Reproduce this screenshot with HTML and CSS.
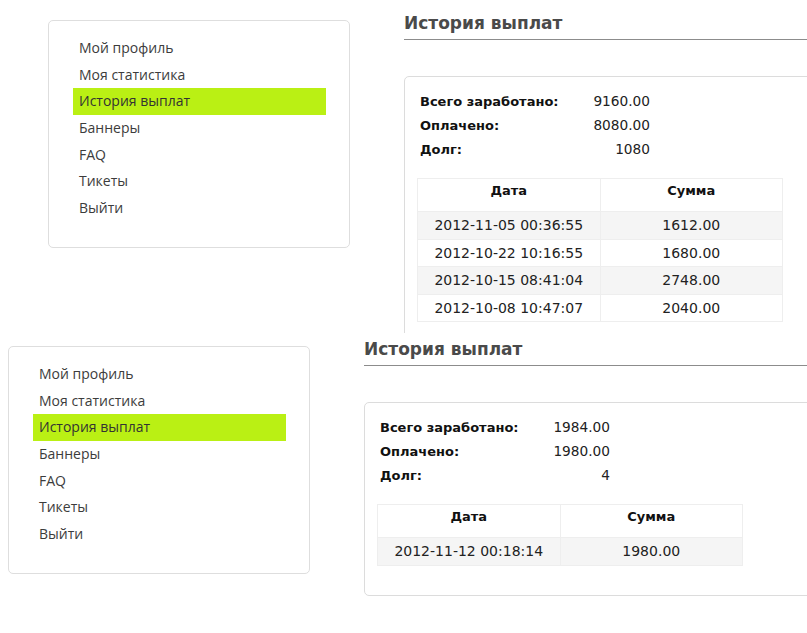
FILE: index.html
```html
<!DOCTYPE html>
<html lang="ru">
<head>
<meta charset="utf-8">
<title>История выплат</title>
<link rel="stylesheet" href="styles.css">
</head>
<body>
<div class="shot shot-a">
  <div class="page">
    <aside class="sidebar">
      <ul class="menu">
        <li>Мой профиль</li>
        <li>Моя статистика</li>
        <li class="active">История выплат</li>
        <li>Баннеры</li>
        <li>FAQ</li>
        <li>Тикеты</li>
        <li>Выйти</li>
      </ul>
    </aside>
    <main class="content">
      <h1 class="title">История выплат</h1>
      <div class="card">
        <table class="summary">
          <tr><td class="label">Всего заработано:</td><td class="value">9160.00</td></tr>
          <tr><td class="label">Оплачено:</td><td class="value">8080.00</td></tr>
          <tr><td class="label">Долг:</td><td class="value">1080</td></tr>
        </table>
        <table class="payments">
          <thead><tr><th>Дата</th><th>Сумма</th></tr></thead>
          <tbody>
            <tr><td>2012-11-05 00:36:55</td><td>1612.00</td></tr>
            <tr><td>2012-10-22 10:16:55</td><td>1680.00</td></tr>
            <tr><td>2012-10-15 08:41:04</td><td>2748.00</td></tr>
            <tr><td>2012-10-08 10:47:07</td><td>2040.00</td></tr>
          </tbody>
        </table>
      </div>
    </main>
  </div>
</div>
<div class="shot shot-b">
  <div class="page">
    <aside class="sidebar">
      <ul class="menu">
        <li>Мой профиль</li>
        <li>Моя статистика</li>
        <li class="active">История выплат</li>
        <li>Баннеры</li>
        <li>FAQ</li>
        <li>Тикеты</li>
        <li>Выйти</li>
      </ul>
    </aside>
    <main class="content">
      <h1 class="title">История выплат</h1>
      <div class="card">
        <table class="summary">
          <tr><td class="label">Всего заработано:</td><td class="value">1984.00</td></tr>
          <tr><td class="label">Оплачено:</td><td class="value">1980.00</td></tr>
          <tr><td class="label">Долг:</td><td class="value">4</td></tr>
        </table>
        <table class="payments">
          <thead><tr><th>Дата</th><th>Сумма</th></tr></thead>
          <tbody>
            <tr><td>2012-11-12 00:18:14</td><td>1980.00</td></tr>
          </tbody>
        </table>
      </div>
    </main>
  </div>
</div>
</body>
</html>
```

FILE: styles.css
```css
* { box-sizing: border-box; }
html, body { margin: 0; padding: 0; background: #fff; }
body { font-family: "DejaVu Sans", Verdana, sans-serif; color: #222; }

.shot { overflow: hidden; width: 807px; }
.shot-a { height: 333px; }
.shot-b { height: 300px; }
.shot-b .page { margin-top: -7px; margin-left: -40px; }

.page {
  display: flex;
  align-items: flex-start;
  width: 980px;
  padding: 10px 0 0 48px;
}

.sidebar {
  width: 302px;
  margin-top: 10px;
  border: 1px solid #dedede;
  border-radius: 5px;
  padding: 0 23px 0 24px;
}
.menu {
  list-style: none;
  margin: 0;
  padding: 14px 0 25px;
  font-family: "Open Sans", "Noto Sans", sans-serif;
  font-size: 14px;
  color: #3c3c3c;
}
.menu li {
  height: 26.67px;
  line-height: 26.67px;
  padding-left: 6px;
}
.menu li.active { background: #baf014; color: #333; }

.content { width: 560px; margin-left: 54px; }

.title {
  margin: 0;
  font-size: 17px;
  font-weight: bold;
  color: #4a4a4a;
  line-height: 24px;
  padding: 1px 0 4px;
  border-bottom: 1px solid #8c8c8c;
}

.card {
  margin-top: 36px;
  border: 1px solid #dcdcdc;
  border-radius: 5px;
  padding: 12px 12px 29px;
}

.summary { border-collapse: collapse; }
.summary td { height: 24px; padding: 0 3px; }
.summary .label { width: 170px; font-size: 13px; font-weight: bold; color: #111; }
.summary .value { width: 63px; font-size: 13.7px; text-align: right; padding-right: 0; color: #222; }

.payments {
  margin-top: 17px;
  width: 366px;
  border-collapse: collapse;
  table-layout: fixed;
  text-align: center;
  border: 1px solid #eee;
}
.payments th, .payments td { border: 1px solid #eee; }
.payments th { height: 33px; font-size: 13px; font-weight: bold; color: #111; padding: 0 0 9px; }
.payments td { height: 27.5px; font-size: 14px; padding: 0; color: #222; }
.payments tbody tr:nth-child(odd) { background: #f5f5f5; }
```
